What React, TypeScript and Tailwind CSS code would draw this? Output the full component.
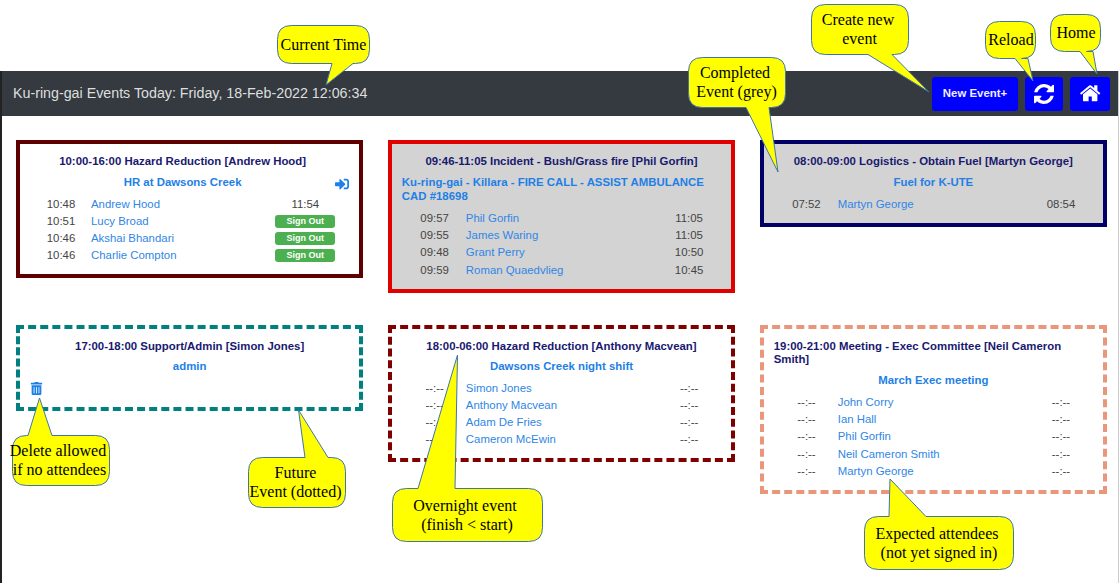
import { FaSignInAlt, FaTrashAlt } from "react-icons/fa";

type Row = { a: string; n: string; b?: string };

function Rows({ rows, grid, signOut, cls = "" }: { rows: Row[]; grid: string; signOut?: boolean; cls?: string }) {
  return (
    <div className={`flex flex-col ${cls}`}>
      {rows.map((r) => (
        <div key={r.n} className={`grid h-[17.1px] items-center text-[11.4px] leading-[17px] ${grid}`}>
          <span className="text-center text-[#444]">{r.a}</span>
          <span className="text-[#2f86e6]">{r.n}</span>
          {r.b ? (
            <span className="text-center text-[#444]">{r.b}</span>
          ) : signOut ? (
            <span className="flex h-[13px] items-center justify-center rounded-[3px] bg-[#4caf50] text-[9px] font-bold text-white">Sign Out</span>
          ) : (
            <span />
          )}
        </div>
      ))}
    </div>
  );
}

function Title({ children, cls = "px-[10px] text-center" }: { children: string; cls?: string }) {
  return <div className={`text-[11.4px] font-bold leading-[13.4px] text-[#191970] ${cls}`}>{children}</div>;
}

function Sub({ children, cls = "px-[10px] text-center" }: { children: string; cls?: string }) {
  return <div className={`mt-[7.5px] mb-[6px] text-[11.4px] font-bold leading-[13.4px] text-[#1e80e6] ${cls}`}>{children}</div>;
}

const dflt = "grid-cols-[62.5px_1fr_60px] pl-[11.5px] pr-[12px]";

function bubble(x: number, y: number, w: number, h: number, t: [number, number, number, number], top = false) {
  const r = 14;
  const R = x + w;
  const B = y + h;
  const [t1, t2, tx, ty] = t;
  const topEdge = top ? `L${t1} ${y} L${tx} ${ty} L${t2} ${y} ` : "";
  const botEdge = top ? "" : `L${t2} ${B} L${tx} ${ty} L${t1} ${B} `;
  return `M${x + r} ${y} ${topEdge}L${R - r} ${y} Q${R} ${y} ${R} ${y + r} L${R} ${B - r} Q${R} ${B} ${R - r} ${B} ${botEdge}L${x + r} ${B} Q${x} ${B} ${x} ${B - r} L${x} ${y + r} Q${x} ${y} ${x + r} ${y} Z`;
}

const bubbles = [
  bubble(277.5, 25.5, 92, 38, [332, 353, 326, 85]),
  bubble(811.5, 4.5, 97, 50, [868, 892, 929, 92]),
  bubble(985.5, 21.5, 50, 37, [1015, 1028, 1033, 81]),
  bubble(1050.5, 14.5, 50, 37, [1080, 1093, 1097, 74]),
  bubble(688.5, 57.5, 97, 50, [746, 769, 778, 172]),
  bubble(12.5, 435.5, 97, 50, [28, 52, 39.5, 398], true),
  bubble(248.5, 457.5, 97, 50, [305, 328, 298.5, 410], true),
  bubble(392.5, 488.5, 150, 53, [418, 455, 457.5, 355], true),
  bubble(864.5, 516.5, 149, 53, [889, 926, 890, 479], true),
];

const label = "absolute z-20 flex flex-col items-center justify-center whitespace-nowrap text-center font-['Liberation_Serif',serif] text-[16px] leading-[19px] text-black";

export default function App() {
  return (
    <div className="relative h-[583px] w-[1119px] overflow-hidden bg-white font-['Liberation_Sans',Arial,sans-serif]">
      <div className="absolute bottom-0 left-0 top-[71px] w-[2px] bg-[#222]" />
      <div className="absolute bottom-0 right-0 top-[71px] w-px bg-[#ccc]" />

      <div className="h-[71px]" />
      <header className="flex h-[45px] items-center justify-between bg-[#343a40] pl-[13px] pr-[9px]">
        <span className="text-[14.25px] text-[#dedede]">Ku-ring-gai Events Today: Friday, 18-Feb-2022 12:06:34</span>
        <div className="flex items-center">
          <button className="flex h-[34px] w-[86px] items-center justify-center rounded-[3px] bg-[#0000ff] text-[11.4px] font-bold text-[#eef]">New Event+</button>
          <button className="ml-[7px] flex h-[34px] w-[38px] items-center justify-center rounded-[3px] bg-[#0000ff] text-white">
            <svg viewBox="128 128 1536 1536" width="20" height="20" fill="currentColor">
              <path d="M1639 1056q0 5-1 7-64 268-268 434.5t-478 166.5q-146 0-282.5-55t-243.5-157l-129 129q-19 19-45 19t-45-19-19-45v-448q0-26 19-45t45-19h448q26 0 45 19t19 45-19 45l-137 137q71 66 161 102t187 36q134 0 250-65t186-179q11-17 53-117 8-23 30-23h192q13 0 22.5 9.5t9.5 22.5zm25-800v448q0 26-19 45t-45 19h-448q-26 0-45-19t-19-45 19-45l138-138q-148-137-349-137-134 0-250 65t-186 179q-11 17-53 117-8 23-30 23h-199q-13 0-22.5-9.5t-9.5-22.5v-7q65-268 270-434.5t480-166.5q146 0 284 55.5t245 156.5l130-129q19-19 45-19t45 19 19 45z" />
            </svg>
          </button>
          <button className="ml-[7px] flex h-[34px] w-[40px] items-center justify-center rounded-[3px] bg-[#0000ff] text-white">
            <svg viewBox="0 0 1792 1792" width="22.4" height="22.4" fill="currentColor">
              <path d="M1472 992v480q0 26-19 45t-45 19h-384v-384h-256v384h-384q-26 0-45-19t-19-45v-480q0-1 .5-3t.5-3l575-474 575 474q1 2 1 6zm223-69l-62 74q-8 9-21 11h-3q-13 0-21-7l-692-577-692 577q-12 8-24 7-13-2-21-11l-62-74q-8-10-7-23.5t11-21.5l719-599q32-26 76-26t76 26l244 204v-195q0-14 9-23t23-9h192q14 0 23 9t9 23v408l219 182q10 8 11 21.5t-7 23.5z" />
            </svg>
          </button>
        </div>
      </header>

      <main className="grid grid-cols-3 items-start gap-x-[24.6px] gap-y-[32px] pl-[16px] pr-[12px] pt-[24px]">
        <section className="h-[138px] border-[4px] border-[#5f0000] pt-[10.5px]">
          <Title cls="pb-[1px] pl-[10px] pr-[24px] text-center">10:00-16:00 Hazard Reduction [Andrew Hood]</Title>
          <div className="relative">
            <Sub cls="pl-[10px] pr-[24px] text-center">HR at Dawsons Creek</Sub>
            <FaSignInAlt className="absolute right-[10px] top-[0.5px] text-[14px] text-[#1e80e6]" />
          </div>
          <Rows
            signOut
            grid="grid-cols-[60px_1fr_60px] pl-[11px] pr-[24px]"
            rows={[
              { a: "10:48", n: "Andrew Hood", b: "11:54" },
              { a: "10:51", n: "Lucy Broad" },
              { a: "10:46", n: "Akshai Bhandari" },
              { a: "10:46", n: "Charlie Compton" },
            ]}
          />
        </section>

        <section className="h-[153px] border-[4px] border-[#e00000] bg-[#d3d3d3] pt-[10.5px]">
          <Title cls="pb-[1px] px-[10px] text-center">09:46-11:05 Incident - Bush/Grass fire [Phil Gorfin]</Title>
          <Sub cls="px-[10px] text-left">Ku-ring-gai - Killara - FIRE CALL - ASSIST AMBULANCE CAD #18698</Sub>
          <Rows
            cls="pt-[1px]"
            grid={dflt}
            rows={[
              { a: "09:57", n: "Phil Gorfin", b: "11:05" },
              { a: "09:55", n: "James Waring", b: "11:05" },
              { a: "09:48", n: "Grant Perry", b: "10:50" },
              { a: "09:59", n: "Roman Quaedvlieg", b: "10:45" },
            ]}
          />
        </section>

        <section className="h-[87px] border-[4px] border-[#000066] bg-[#d3d3d3] pt-[10.5px]">
          <Title cls="pb-[1px] px-[10px] text-center">08:00-09:00 Logistics - Obtain Fuel [Martyn George]</Title>
          <Sub>Fuel for K-UTE</Sub>
          <Rows grid={dflt} rows={[{ a: "07:52", n: "Martyn George", b: "08:54" }]} />
        </section>

        <section className="h-[86px] border-[4px] border-dashed border-[#008080] pt-[10.5px]">
          <Title>17:00-18:00 Support/Admin [Simon Jones]</Title>
          <Sub>admin</Sub>
          <div className="pl-[10px] pt-[2px]">
            <FaTrashAlt className="text-[13px] text-[#1e80e6]" />
          </div>
        </section>

        <section className="h-[137px] border-[4px] border-dashed border-[#800000] pt-[10.5px]">
          <Title>18:00-06:00 Hazard Reduction [Anthony Macvean]</Title>
          <Sub>Dawsons Creek night shift</Sub>
          <Rows
            grid={dflt}
            rows={[
              { a: "--:--", n: "Simon Jones", b: "--:--" },
              { a: "--:--", n: "Anthony Macvean", b: "--:--" },
              { a: "--:--", n: "Adam De Fries", b: "--:--" },
              { a: "--:--", n: "Cameron McEwin", b: "--:--" },
            ]}
          />
        </section>

        <section className="h-[169px] border-[4px] border-dashed border-[#e9967a] pt-[10.5px]">
          <Title cls="px-[10px] text-left">19:00-21:00 Meeting - Exec Committee [Neil Cameron Smith]</Title>
          <Sub>March Exec meeting</Sub>
          <Rows
            cls="pt-[1px]"
            grid={dflt}
            rows={[
              { a: "--:--", n: "John Corry", b: "--:--" },
              { a: "--:--", n: "Ian Hall", b: "--:--" },
              { a: "--:--", n: "Phil Gorfin", b: "--:--" },
              { a: "--:--", n: "Neil Cameron Smith", b: "--:--" },
              { a: "--:--", n: "Martyn George", b: "--:--" },
            ]}
          />
        </section>
      </main>

      <svg className="pointer-events-none absolute inset-0 z-10" width="1119" height="583">
        {bubbles.map((d, i) => (
          <path key={i} d={d} fill="#ffff00" stroke="#3f74ad" strokeWidth="1" />
        ))}
      </svg>

      <div className={`${label} left-[277px] top-[25px] h-[38px] w-[93px]`}>Current Time</div>
      <div className={`${label} left-[811px] top-[10px] h-[38px] w-[97px]`}><span className="pr-[3px]">Create new</span><span>event</span></div>
      <div className={`${label} left-[986px] top-[21px] h-[37px] w-[50px]`}>Reload</div>
      <div className={`${label} left-[1051px] top-[14px] h-[37px] w-[50px]`}>Home</div>
      <div className={`${label} left-[688px] top-[63px] h-[38px] w-[97px]`}><span className="pr-[3px]">Completed</span><span>Event (grey)</span></div>
      <div className={`${label} left-[11px] top-[441px] h-[38px] w-[97px]`}><span className="pr-[3px]">Delete allowed</span><span>if no attendees</span></div>
      <div className={`${label} left-[247px] top-[463px] h-[38px] w-[97px]`}><span>Future</span><span>Event (dotted)</span></div>
      <div className={`${label} left-[392px] top-[496px] h-[38px] w-[150px]`}><span className="pr-[4px]">Overnight event</span><span>(finish &lt; start)</span></div>
      <div className={`${label} left-[864px] top-[524px] h-[38px] w-[150px]`}><span className="pr-[4px]">Expected attendees</span><span>(not yet signed in)</span></div>
    </div>
  );
}
